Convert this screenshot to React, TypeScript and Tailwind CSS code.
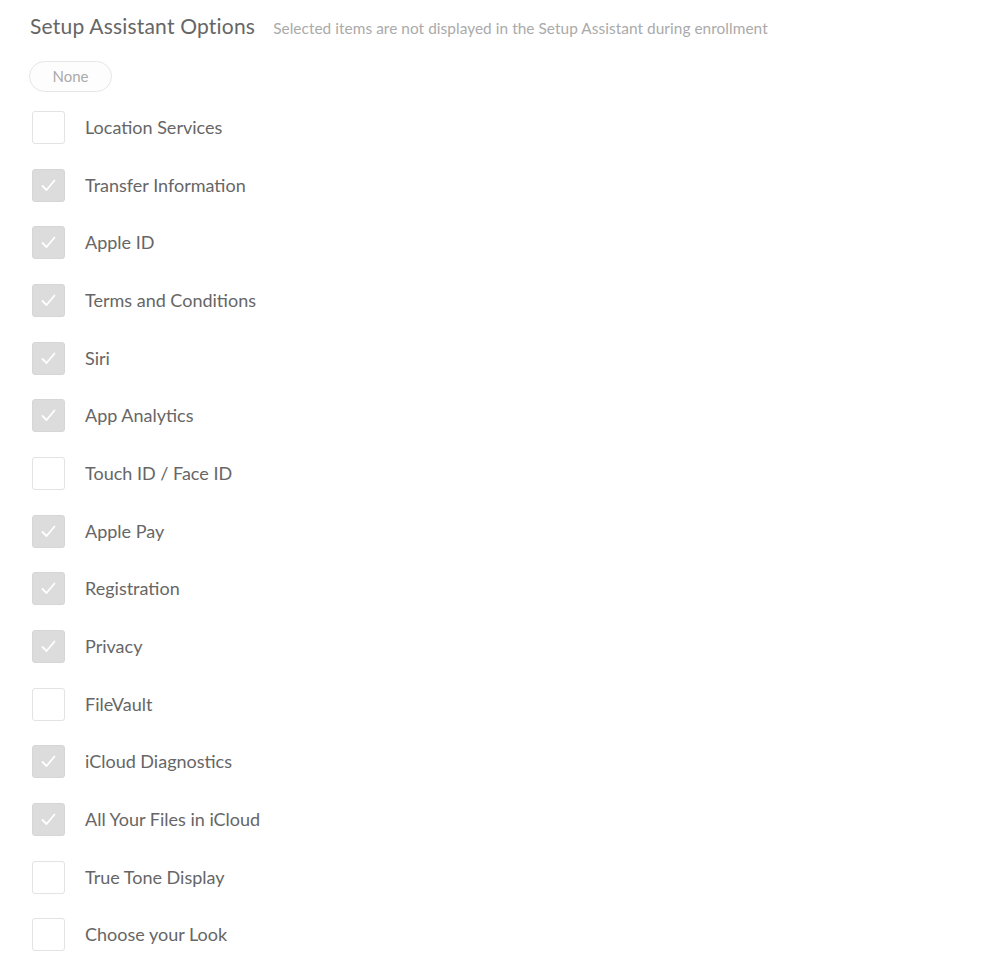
import { useState } from "react"

const OPTIONS = [
    { label: "Location Services", checked: false },
    { label: "Transfer Information", checked: true },
    { label: "Apple ID", checked: true },
    { label: "Terms and Conditions", checked: true },
    { label: "Siri", checked: true },
    { label: "App Analytics", checked: true },
    { label: "Touch ID / Face ID", checked: false },
    { label: "Apple Pay", checked: true },
    { label: "Registration", checked: true },
    { label: "Privacy", checked: true },
    { label: "FileVault", checked: false },
    { label: "iCloud Diagnostics", checked: true },
    { label: "All Your Files in iCloud", checked: true },
    { label: "True Tone Display", checked: false },
    { label: "Choose your Look", checked: false },
]

function App() {
    const [items, setItems] = useState(OPTIONS)

    const toggle = (index: number) => {
        setItems(items.map((it, i) => (i == index ? { ...it, checked: !it.checked } : it)))
    }

    return (
        <div className="w-[999px] h-[970px] bg-white pl-[30px] pt-[10px] font-['Lato',sans-serif] overflow-hidden">
            <div className="flex flex-row items-baseline">
                <span className="text-[21px] text-[#666] tracking-[0.2px]">Setup Assistant Options</span>
                <span className="ml-[18px] text-[15.4px] text-[#aaa] tracking-[0.05px]">Selected items are not displayed in the Setup Assistant during enrollment</span>
            </div>

            <button
                className="mt-[19px] -ml-[1px] w-[83px] h-[31px] rounded-full border border-[#e6e6e6] bg-[#fdfdfd] text-[15px] text-[#aaa] flex items-center justify-center"
                onClick={() => setItems(items.map((it) => ({ ...it, checked: false })))}
            >
                None
            </button>

            <div className="mt-[7px] flex flex-col">
                {items.map((item, index) => (
                    <div key={index} className="flex flex-row items-center h-[57.7px] cursor-pointer" onClick={() => toggle(index)}>
                        <div
                            className={
                                item.checked
                                    ? "ml-[2px] w-[33px] h-[33px] rounded-[3px] bg-[#dcdcdc] border border-[#d6d6d6] flex items-center justify-center"
                                    : "ml-[2px] w-[33px] h-[33px] rounded-[3px] bg-white border border-[#e3e3e3]"
                            }
                        >
                            {item.checked && (
                                <svg width="15" height="13" viewBox="0 0 15 13" fill="none">
                                    <path d="M1.5 7 L5.5 11 L13.5 1.5" stroke="white" strokeWidth="1.8" strokeLinecap="round" strokeLinejoin="round" />
                                </svg>
                            )}
                        </div>
                        <span className="ml-[20px] text-[18px] text-[#666]">{item.label}</span>
                    </div>
                ))}
            </div>
        </div>
    )
}

export default App
